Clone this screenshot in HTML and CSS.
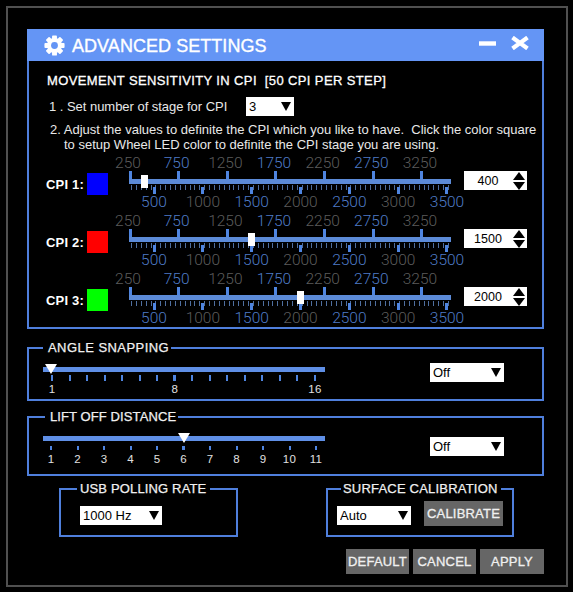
FILE: index.html
```html
<!DOCTYPE html>
<html lang="en">
<head>
<meta charset="utf-8">
<title>Advanced Settings</title>
<link rel="stylesheet" href="styles.css">
</head>
<body>
<main class="frame">
  <section class="panel">
    <header class="titlebar">
      <svg class="gear" viewBox="0 0 24 24" aria-hidden="true">
        <g fill="#fff">
          <rect x="9.2" y="0.5" width="5.6" height="23" rx="1"/>
          <rect x="9.2" y="0.5" width="5.6" height="23" rx="1" transform="rotate(45 12 12)"/>
          <rect x="9.2" y="0.5" width="5.6" height="23" rx="1" transform="rotate(90 12 12)"/>
          <rect x="9.2" y="0.5" width="5.6" height="23" rx="1" transform="rotate(135 12 12)"/>
          <circle cx="12" cy="12" r="8.6"/>
        </g>
        <circle cx="12" cy="12" r="3.9" fill="#6495f5"/>
      </svg>
      <h1 class="title">ADVANCED SETTINGS</h1>
      <svg class="winbtn-min" viewBox="0 0 17 5" aria-hidden="true"><rect width="17" height="4.4" y="0.3" fill="#fff"/></svg>
      <svg class="winbtn-close" viewBox="0 0 20 14" aria-hidden="true"><path d="M2.5 1.5 17.5 12.5M17.5 1.5 2.5 12.5" stroke="#fff" stroke-width="4.2" fill="none"/></svg>
    </header>
    <div class="panel-body">
      <h2 class="heading">MOVEMENT SENSITIVITY IN CPI &nbsp;[50 CPI PER STEP]</h2>
      <div class="step-one">
        <span class="step-text">1 . Set number of stage for CPI</span>
        <span class="select s-stage"><select><option>3</option></select></span>
      </div>
      <p class="step-two">2. Adjust the values to definite the CPI which you like to have. &nbsp;Click the color square<br><span class="indent">to setup Wheel LED color to definite the CPI stage you are using.</span></p>

      <div class="cpi-row">
        <span class="cpi-label">CPI 1:</span><span class="swatch blue"></span>
        <div class="slider">
          <div class="stops top">
            <span class="stop dim"><b>250</b><i></i></span><span class="stop lit"><b>750</b><i></i></span><span class="stop dim"><b>1250</b><i></i></span><span class="stop lit"><b>1750</b><i></i></span><span class="stop dim"><b>2250</b><i></i></span><span class="stop lit"><b>2750</b><i></i></span><span class="stop dim"><b>3250</b><i></i></span>
          </div>
          <div class="track"><span class="handle" style="left:12px"></span></div>
          <div class="stops bottom">
            <span class="stop lit"><i></i><b>500</b></span><span class="stop dim"><i></i><b>1000</b></span><span class="stop lit"><i></i><b>1500</b></span><span class="stop dim"><i></i><b>2000</b></span><span class="stop lit"><i></i><b>2500</b></span><span class="stop dim"><i></i><b>3000</b></span><span class="stop lit"><i></i><b>3500</b></span>
          </div>
        </div>
        <div class="spinner"><span class="spin-val">400</span><span class="spin-arrows"><i class="up"></i><i class="down"></i></span></div>
      </div>

      <div class="cpi-row">
        <span class="cpi-label">CPI 2:</span><span class="swatch red"></span>
        <div class="slider">
          <div class="stops top">
            <span class="stop dim"><b>250</b><i></i></span><span class="stop lit"><b>750</b><i></i></span><span class="stop dim"><b>1250</b><i></i></span><span class="stop lit"><b>1750</b><i></i></span><span class="stop dim"><b>2250</b><i></i></span><span class="stop lit"><b>2750</b><i></i></span><span class="stop dim"><b>3250</b><i></i></span>
          </div>
          <div class="track"><span class="handle" style="left:119px"></span></div>
          <div class="stops bottom">
            <span class="stop lit"><i></i><b>500</b></span><span class="stop dim"><i></i><b>1000</b></span><span class="stop lit"><i></i><b>1500</b></span><span class="stop dim"><i></i><b>2000</b></span><span class="stop lit"><i></i><b>2500</b></span><span class="stop dim"><i></i><b>3000</b></span><span class="stop lit"><i></i><b>3500</b></span>
          </div>
        </div>
        <div class="spinner"><span class="spin-val">1500</span><span class="spin-arrows"><i class="up"></i><i class="down"></i></span></div>
      </div>

      <div class="cpi-row last">
        <span class="cpi-label">CPI 3:</span><span class="swatch green"></span>
        <div class="slider">
          <div class="stops top">
            <span class="stop dim"><b>250</b><i></i></span><span class="stop lit"><b>750</b><i></i></span><span class="stop dim"><b>1250</b><i></i></span><span class="stop lit"><b>1750</b><i></i></span><span class="stop dim"><b>2250</b><i></i></span><span class="stop lit"><b>2750</b><i></i></span><span class="stop dim"><b>3250</b><i></i></span>
          </div>
          <div class="track"><span class="handle" style="left:168px"></span></div>
          <div class="stops bottom">
            <span class="stop lit"><i></i><b>500</b></span><span class="stop dim"><i></i><b>1000</b></span><span class="stop lit"><i></i><b>1500</b></span><span class="stop dim"><i></i><b>2000</b></span><span class="stop lit"><i></i><b>2500</b></span><span class="stop dim"><i></i><b>3000</b></span><span class="stop lit"><i></i><b>3500</b></span>
          </div>
        </div>
        <div class="spinner"><span class="spin-val">2000</span><span class="spin-arrows"><i class="up"></i><i class="down"></i></span></div>
      </div>
    </div>
  </section>

  <fieldset class="group angle">
    <legend>ANGLE SNAPPING</legend>
    <div class="wide-slider">
      <div class="wide-track"><span class="pointer" style="left:2px"></span></div>
      <div class="notches n16">
        <span class="notch"><i></i><b>1</b></span><span class="notch"><i></i></span><span class="notch"><i></i></span><span class="notch"><i></i></span><span class="notch"><i></i></span><span class="notch"><i></i></span><span class="notch"><i></i></span><span class="notch major"><i></i><b>8</b></span><span class="notch"><i></i></span><span class="notch"><i></i></span><span class="notch"><i></i></span><span class="notch"><i></i></span><span class="notch"><i></i></span><span class="notch"><i></i></span><span class="notch"><i></i></span><span class="notch"><i></i><b>16</b></span>
      </div>
    </div>
    <span class="select s-off"><select><option>Off</option></select></span>
  </fieldset>

  <fieldset class="group lift">
    <legend>LIFT OFF DISTANCE</legend>
    <div class="wide-slider">
      <div class="wide-track"><span class="pointer" style="left:135px"></span></div>
      <div class="notches n11">
        <span class="notch"><i></i><b>1</b></span><span class="notch"><i></i><b>2</b></span><span class="notch"><i></i><b>3</b></span><span class="notch"><i></i><b>4</b></span><span class="notch"><i></i><b>5</b></span><span class="notch major"><i></i><b>6</b></span><span class="notch"><i></i><b>7</b></span><span class="notch"><i></i><b>8</b></span><span class="notch"><i></i><b>9</b></span><span class="notch"><i></i><b>10</b></span><span class="notch"><i></i><b>11</b></span>
      </div>
    </div>
    <span class="select s-off"><select><option>Off</option></select></span>
  </fieldset>

  <div class="pair">
    <fieldset class="group usb">
      <legend>USB POLLING RATE</legend>
      <span class="select s-usb"><select><option>1000 Hz</option></select></span>
    </fieldset>
    <fieldset class="group surface">
      <legend>SURFACE CALIBRATION</legend>
      <span class="select s-auto"><select><option>Auto</option></select></span>
      <button class="btn calibrate" type="button">CALIBRATE</button>
    </fieldset>
  </div>

  <div class="actions">
    <button class="btn action" type="button">DEFAULT</button>
    <button class="btn action" type="button">CANCEL</button>
    <button class="btn action" type="button">APPLY</button>
  </div>
</main>
</body>
</html>
```
FILE: styles.css
```css
* { box-sizing: border-box; }
html, body { margin: 0; padding: 0; background: #000; }
body { width: 573px; height: 592px; overflow: hidden; font-family: "Liberation Sans", Arial, sans-serif; color: #f0f0f0; }

.frame { margin: 6px 0 0 6px; width: 562px; height: 581px; border: 2px solid #505050; padding: 21px 0 0 19px; }

.panel { width: 517px; height: 300px; }
.titlebar { height: 32px; background: #6495f5; display: flex; align-items: center; padding-left: 17px; }
.gear { width: 21px; height: 21px; flex: none; }
.title { margin: 2px 0 0 7px; font-size: 18px; font-weight: 400; letter-spacing: 0.05px; color: #fff; -webkit-text-stroke: 0.35px #fff; flex: 1; white-space: nowrap; }
.winbtn-min { width: 17px; height: 5px; margin: 0 14px 4px 0; }
.winbtn-close { width: 20px; height: 14px; margin: 0 14px 4px 0; }

.panel-body { height: 268px; border: solid #4f7fdc; border-width: 0 2px 2px 2px; padding: 12px 0 0 18px; }
.heading { margin: 0; font-size: 13px; font-weight: 400; letter-spacing: 0.38px; line-height: 16px; color: #fff; -webkit-text-stroke: 0.3px #fff; white-space: pre; }
.step-one { display: flex; align-items: center; height: 19px; margin: 8px 0 0 2px; }
.step-text { width: 197px; font-size: 13px; letter-spacing: -0.03px; color: #e8e8e8; }
.step-two { margin: 7px 0 6px 3px; font-size: 13px; line-height: 14.5px; color: #e8e8e8; white-space: nowrap; }
.indent { margin-left: 14px; }

.select { position: relative; display: inline-block; height: 19px; background: #fff; flex: none; }
.select select { display: block; width: 100%; height: 19px; border: 0; padding: 0 0 0 3px; background: transparent; appearance: none; -webkit-appearance: none; font: 13px "Liberation Sans", Arial, sans-serif; color: #000; border-radius: 0; outline: 0; }
.select::after { content: ""; position: absolute; right: 3px; top: 5px; width: 0; height: 0; border-left: 5px solid transparent; border-right: 5px solid transparent; border-top: 9px solid #000; pointer-events: none; }
.s-stage { width: 48px; }
.s-off { width: 74px; }
.s-usb { width: 82px; }
.s-auto { width: 74px; }

.cpi-row { display: flex; align-items: flex-start; height: 58px; margin-left: -1px; }
.cpi-row.last { height: 50px; }
.cpi-label { width: 41px; margin-top: 19px; font-size: 13px; font-weight: 700; letter-spacing: 0.2px; color: #fff; white-space: nowrap; }
.swatch { width: 21px; height: 22px; margin-top: 15px; flex: none; }
.blue { background: #0000ff; }
.red { background: #ff0000; }
.green { background: #00ff00; }

.slider { width: 322px; margin-left: 21px; flex: none; }
.stops { display: flex; justify-content: space-between; }
.stops.top { padding: 0 28px 0 0; height: 21px; }
.stops.bottom { padding: 0 3px 0 24px; height: 23px; background: repeating-linear-gradient(90deg, #4f6f9f 0, #4f6f9f 1px, transparent 1px, transparent 4.876px) 2px 1px / 100% 5px no-repeat; }
.stop { width: 2px; display: flex; flex-direction: column; align-items: center; }
.stop b { font: 300 15.5px/15px Roboto, "Liberation Sans", sans-serif; }
.stop i { display: block; width: 3px; flex: none; background: #4f85e0; }
.stops.top i { height: 8px; }
.stops.top b { height: 15px; margin: -2px 4px 0 0; }
.stops.bottom i { height: 7px; margin-top: 3px; }
.stops.bottom b { margin-top: 1px; }
.dim b { color: #5c5c5c; }
.lit b { color: #4f7cc8; }

.track { position: relative; height: 5px; background: #5c8bd8; }
.handle { position: absolute; top: -4px; width: 7px; height: 13px; background: #fff; }

.spinner { display: flex; align-items: center; justify-content: space-between; width: 63px; height: 19px; margin: 13px 0 0 13px; background: #fff; color: #000; padding-left: 6px; flex: none; }
.spin-val { font-size: 12.5px; width: 36px; text-align: center; }
.spin-arrows { width: 14px; display: flex; flex-direction: column; gap: 2px; }
.spin-arrows i { display: block; width: 0; height: 0; border-left: 6px solid transparent; border-right: 6px solid transparent; }
.up { border-bottom: 8px solid #000; }
.down { border-top: 8px solid #000; }

.group { margin: 0; padding: 0; border: 2px solid #4f7fdc; display: block; min-width: 0; }
.group legend { padding: 0 2px 0 5px; font-size: 13px; line-height: 14px; letter-spacing: 0.45px; color: #f0f0f0; -webkit-text-stroke: 0.25px #f0f0f0; white-space: nowrap; }
.angle, .lift { width: 517px; display: flex; align-items: flex-start; }
.angle { margin-top: 12px; height: 60px; }
.lift { margin-top: 9px; height: 66px; }
.angle legend { margin-left: 14px; }
.group.lift legend { margin-left: 16px; letter-spacing: 0.1px; }

.wide-slider { width: 282px; margin-left: 14px; flex: none; }
.angle .wide-slider { margin-top: 12px; }
.lift .wide-slider { margin-top: 12px; }
.wide-track { position: relative; height: 5px; background: #5f8fe6; }
.pointer { position: absolute; top: -3px; width: 12px; height: 10px; background: #fff; clip-path: polygon(0 0, 100% 0, 50% 100%); }
.notches { display: flex; justify-content: space-between; margin-top: 3px; }
.n16 { padding: 0 9px 0 8px; }
.n11 { padding: 0 8px 0 7px; margin-top: 5px; }
.notch { width: 2px; display: flex; flex-direction: column; align-items: center; }
.notch i { display: block; width: 2px; height: 6px; flex: none; background: #4f85e0; }
.n11 .notch i { height: 4px; }
.notch.major i { width: 3px; }
.notch b { font-size: 11.5px; font-weight: 400; line-height: 12px; margin-top: 2px; letter-spacing: 0.3px; color: #e0e0e0; }
.n11 .notch b { margin-top: 3px; }
.group .select { margin: 8px 0 0 105px; }
.group.lift .select { margin-top: 13px; }

.pair { display: flex; margin-top: 6px; padding-left: 32px; }
.usb { width: 179px; height: 55px; }
.group.usb legend { margin-left: 16px; padding: 0 4px 0 3px; letter-spacing: 0.15px; }
.group.usb .select { margin: 10px 0 0 19px; }
.surface { width: 188px; height: 55px; margin-left: 88px; display: flex; align-items: flex-start; }
.group.surface legend { margin-left: 13px; padding: 0 3px 0 2px; letter-spacing: 0.2px; }
.group.surface .select { margin: 10px 0 0 9px; }

.btn { border: 0; padding: 0; background: #666; color: #f0f0f0; font: 400 13px "Liberation Sans", Arial, sans-serif; letter-spacing: 0.2px; -webkit-text-stroke: 0.3px #f0f0f0; }
.calibrate { width: 79px; height: 25px; margin: 5px 0 0 13px; }
.actions { display: flex; justify-content: flex-end; gap: 4px; width: 517px; margin-top: 12px; }
.action { width: 63px; height: 25px; }
.action:last-child { width: 64px; }
```
